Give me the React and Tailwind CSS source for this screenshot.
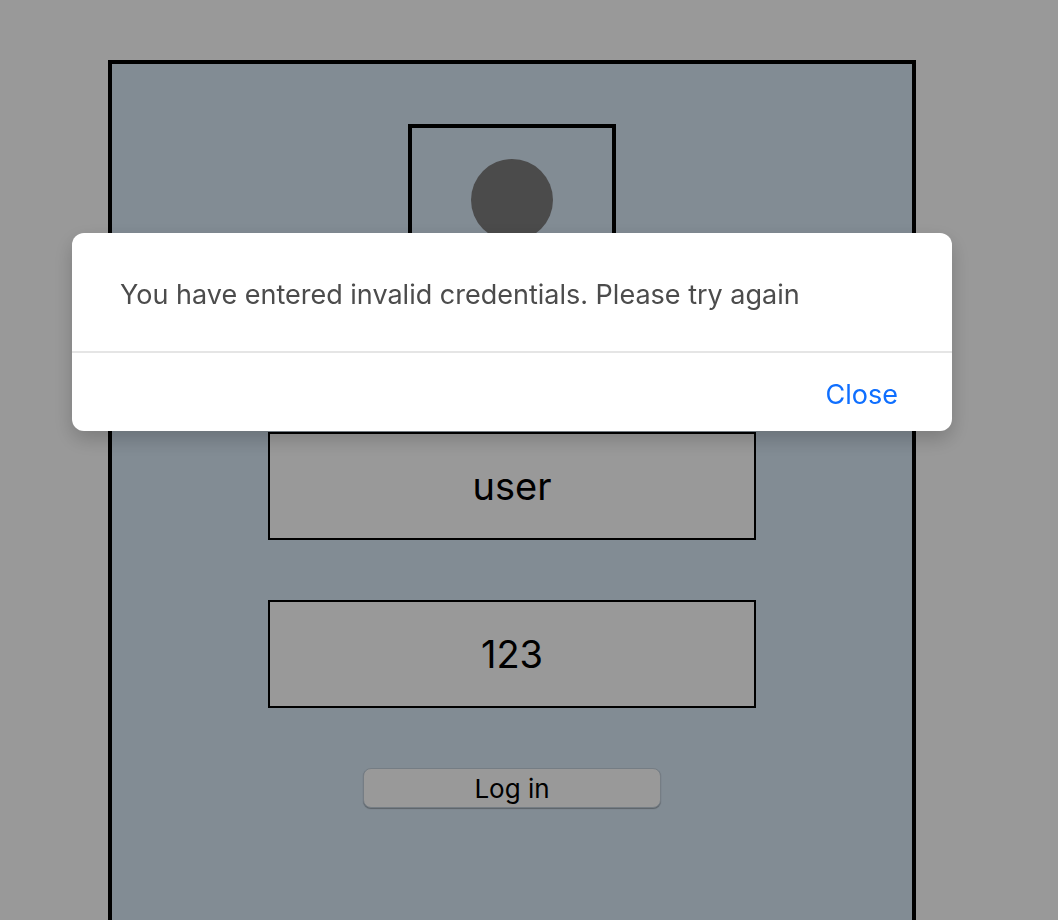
import { useState } from "react";

function Avatar() {
  return (
    <div className="size-52 border-4 border-black">
      <svg viewBox="0 0 200 200" className="size-full" aria-hidden="true">
        <circle cx="100" cy="72" r="41" fill="#7d7d7d" />
        <path d="M30 186c0-42 28-66 70-66s70 24 70 66z" fill="#7d7d7d" />
      </svg>
    </div>
  );
}

function Field({ label, ...props }) {
  return (
    <input
      aria-label={label}
      className="h-[108px] w-full border-2 border-black bg-white px-4 text-center text-[38px] text-black outline-none"
      {...props}
    />
  );
}

function AlertDialog({ message, onClose }) {
  return (
    <div className="fixed inset-0 flex items-start justify-center bg-black/40 pt-[233px] pr-[34px]">
      <div
        role="alertdialog"
        aria-modal="true"
        aria-labelledby="alert-message"
        className="w-full max-w-[880px] rounded-xl bg-white shadow-[0_8px_20px_rgba(0,0,0,0.2)]"
      >
        <p id="alert-message" className="px-12 pt-11 pb-[38px] text-[27px] leading-9 text-[#4c4c4c]">
          {message}
        </p>
        <div className="flex justify-end border-t-2 border-[#e5e5e5] px-12 pt-6 pb-[18px]">
          <button type="button" onClick={onClose} className="px-1.5 text-[27px] leading-9 text-[#0f6fff]">
            Close
          </button>
        </div>
      </div>
    </div>
  );
}

export default function App() {
  const [open, setOpen] = useState(true);
  const [user, setUser] = useState("user");
  const [password, setPassword] = useState("123");

  return (
    <main className="flex min-h-screen justify-center bg-white pt-[60px] pr-[34px] font-['Inter',sans-serif]">
      <form
        onSubmit={(e) => {
          e.preventDefault();
          setOpen(true);
        }}
        className="flex w-full max-w-[808px] flex-col items-center border-4 border-b-0 border-black bg-[#d9e9f7] pt-[60px]"
      >
        <Avatar />
        <div className="mt-[100px] flex w-full max-w-[488px] flex-col items-center gap-[60px]">
          <Field label="Username" value={user} onChange={(e) => setUser(e.target.value)} />
          <Field label="Password" value={password} onChange={(e) => setPassword(e.target.value)} />
          <button
            type="submit"
            className="h-10 w-full max-w-[298px] rounded-lg border border-[#c3d1dd] bg-white pt-0.5 text-[26px] leading-9 text-black shadow-[0_1px_1px_rgba(0,0,0,0.3)]"
          >
            Log in
          </button>
        </div>
      </form>
      {open && (
        <AlertDialog
          message="You have entered invalid credentials. Please try again"
          onClose={() => setOpen(false)}
        />
      )}
    </main>
  );
}
